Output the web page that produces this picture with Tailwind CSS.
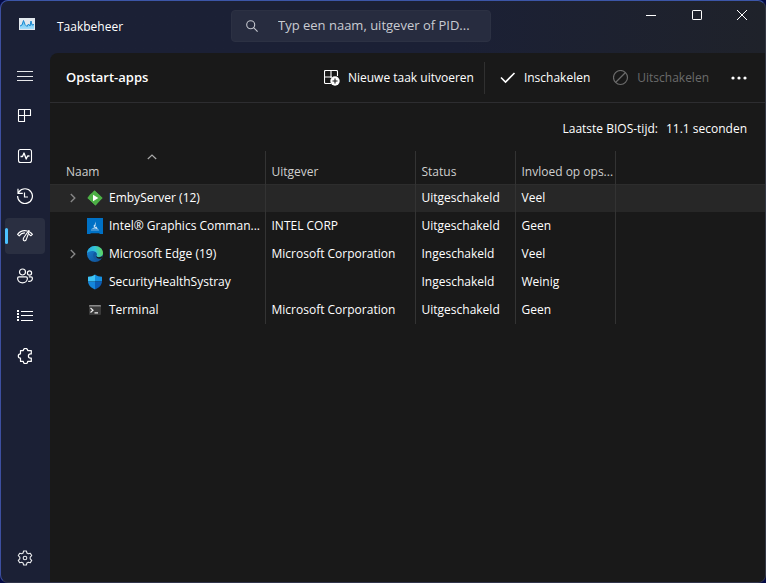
<!DOCTYPE html>
<html lang="nl">

<head>
  <meta charset="UTF-8" />
  <meta name="viewport" content="width=device-width, initial-scale=1.0" />
  <title>Taakbeheer</title>
  <script src="https://cdn.jsdelivr.net/npm/@tailwindcss/browser@4"></script>
</head>

<body class="bg-[#050b45] text-white text-xs font-['Open_Sans','Noto_Sans',sans-serif]">
  <div class="min-h-screen flex flex-col rounded-lg overflow-hidden border border-t-[#3c56a8] border-l-[#3d4fa0] border-r-[#343844] border-b-[#30344a] bg-linear-to-r from-[#1b2035] from-60% to-[#1f222a]">
    <!-- Title bar -->
    <header class="h-[52px] flex items-start">
      <div class="w-[230px] h-[52px] shrink-0 flex items-center pl-[18px] gap-[22px]">
        <svg class="w-4 h-4 -mt-1" viewBox="0 0 16 16">
          <defs>
            <linearGradient id="area" x1="0" y1="0" x2="0" y2="1">
              <stop offset="0" stop-color="#4fc0f0" />
              <stop offset="1" stop-color="#a5dcfa" />
            </linearGradient>
          </defs>
          <rect x="0" y="1" width="16" height="12" fill="#e2e8ee" />
          <path d="M1 9 3 8 4.500 3.500 6 7.500 8 9.500 9.500 7 11 9 12 4 13 8 15 7.500V12H1z" fill="url(#area)" />
          <path d="M1 9 3 8 4.500 3.500 6 7.500 8 9.500 9.500 7 11 9 12 4 13 8 15 7.500" fill="none" stroke="#1987cf" />
        </svg>
        <h1>Taakbeheer</h1>
      </div>
      <label class="mt-[9px] w-[260px] h-8 flex items-center gap-5 px-[14px] rounded bg-[#272c3f] border border-[#2c3143]">
        <svg class="w-3 h-3 shrink-0" viewBox="0 0 12 12" fill="none" stroke="#c4c6cd" stroke-width="1.1">
          <circle cx="4.700" cy="4.700" r="4" />
          <path d="m7.600 7.600 4 4" />
        </svg>
        <input type="text" aria-label="Zoeken" placeholder="Typ een naam, uitgever of PID..." class="min-w-0 flex-1 text-[13px] outline-none placeholder:text-[#c9cbd2]" />
      </label>
      <div class="ml-auto flex">
        <button aria-label="Minimaliseren" class="w-[46px] h-7 grid place-items-center hover:bg-white/10">
          <svg class="w-[10px] h-[10px]" viewBox="0 0 10 10" stroke="#fff"><path d="M0 5.500h10" /></svg>
        </button>
        <button aria-label="Maximaliseren" class="w-[45px] h-7 grid place-items-center hover:bg-white/10">
          <svg class="w-[10px] h-[10px]" viewBox="0 0 10 10" fill="none" stroke="#fff"><rect x=".5" y=".5" width="9" height="9" rx=".6" /></svg>
        </button>
        <button aria-label="Sluiten" class="w-[46px] h-7 grid place-items-center hover:bg-red-600">
          <svg class="w-[10px] h-[10px]" viewBox="0 0 10 10" stroke="#fff"><path d="m0 0 10 10M10 0 0 10" /></svg>
        </button>
      </div>
    </header>

    <div class="flex-1 flex">
      <!-- Navigation -->
      <nav class="w-[49px] shrink-0 flex flex-col gap-1 px-1 pt-[5px] pb-[6px]">
        <button aria-label="Menu" class="h-9 w-10 grid place-items-center rounded">
          <svg class="w-4 h-4" viewBox="0 0 16 16" stroke="#e6e7ea"><path d="M0 3.500h16M0 8.500h16M0 12.500h16" /></svg>
        </button>
        <a href="#processen" aria-label="Processen" class="h-9 w-10 grid place-items-center rounded">
          <svg class="w-4 h-4" viewBox="0 0 16 16" fill="none" stroke="#fff" stroke-width="1.1">
            <path d="M2 1.500H13Q13.500 1.500 13.500 2V7.500H1.500V2Q1.500 1.500 2 1.500zM1.500 7.500V13Q1.500 13.500 2 13.500H7.500V1.500" />
          </svg>
        </a>
        <a href="#prestaties" aria-label="Prestaties" class="h-9 w-10 grid place-items-center rounded">
          <svg class="w-4 h-4" viewBox="0 0 16 16" fill="none" stroke="#fff" stroke-width="1.1" stroke-linejoin="round">
            <rect x="1.500" y="1.500" width="13" height="13" rx="2" />
            <path d="M3.500 8.500H5.500L7 5 9.200 11 10.600 8H12.500" stroke-width="1.300" />
          </svg>
        </a>
        <a href="#geschiedenis" aria-label="App-geschiedenis" class="h-9 w-10 grid place-items-center rounded">
          <svg class="w-4 h-4" viewBox="0 0 16 16" fill="none" stroke="#fff" stroke-width="1.2">
            <path d="M.6 8A7.400 7.400 0 1 0 2 3.800L1 5.300M1 .8V5.400H5.800M7.500 4.500V9H11" />
          </svg>
        </a>
        <a href="#opstart-apps" aria-label="Opstart-apps" aria-current="page" class="h-9 w-10 flex items-center rounded bg-[#2a2f41]">
          <span class="w-[3px] h-4 rounded-full bg-[#4cc2ff]"></span>
          <svg class="w-4 h-4 ml-[9px]" viewBox="0 0 16 16" fill="none" stroke="#fff" stroke-width="1.1" stroke-linejoin="round" stroke-linecap="round">
            <path d="M.6 6.400C2.200 4 4.800 2.600 7.800 2.600 8.700 2.600 9.500 2.700 10.300 3M.6 6.400 2.200 7.800C3.400 6.200 5.200 5 7.500 4.900M13 4.300C14 4.900 14.800 5.600 15.400 6.400L13.800 7.800 12.200 6.300" />
            <path d="M11.600 2.800 6.700 9.800C5.800 11.400 6.300 12.600 7.400 12.800 8.600 13 9.300 12 9.500 10.900L12.300 3.200Q12.100 2.400 11.600 2.800z" />
          </svg>
        </a>
        <a href="#gebruikers" aria-label="Gebruikers" class="h-9 w-10 grid place-items-center rounded">
          <svg class="w-4 h-4" viewBox="0 0 16 16" fill="none" stroke="#fff" stroke-width="1.200">
            <circle cx="5.500" cy="4" r="3" />
            <circle cx="12.500" cy="5" r="2.100" />
            <path d="M2 8.900H9Q10.400 8.900 10.400 10.300C10.400 13.200 8.200 14.800 5.500 14.800S.6 13.200.6 10.300Q.6 8.900 2 8.900zM11.800 8.900H14Q15.400 8.900 15.400 10.300C15.400 12.600 13.900 13.700 11.200 13.400" />
          </svg>
        </a>
        <a href="#details" aria-label="Details" class="h-9 w-10 grid place-items-center rounded">
          <svg class="w-4 h-4" viewBox="0 0 16 16" fill="none" stroke="#fff">
            <path d="M4 3.500H16M4 7.500H16M4 12.500H16" />
            <path d="M1 2v12" stroke-width="2" stroke-dasharray="2 1" />
          </svg>
        </a>
        <a href="#services" aria-label="Services" class="h-9 w-10 grid place-items-center rounded">
          <svg class="w-4 h-4" viewBox="0 0 16 16" fill="none" stroke="#fff" stroke-width="1.200" stroke-linejoin="round">
            <path d="M3.500 2.600H6.300A2.200 2.200 0 0 1 10.700 2.600H14.300V5.900H13.500A2.100 2.100 0 0 0 13.500 10.100H14.300V13.400H10.700A2.200 2.200 0 0 1 6.300 13.400H3.500V10.200A2.200 2.200 0 0 1 3.500 5.800z" />
          </svg>
        </a>
        <a href="#instellingen" aria-label="Instellingen" class="mt-auto h-9 w-10 grid place-items-center rounded">
          <svg class="w-4 h-4" viewBox="0 0 16 16" fill="none" stroke="#e8e9ec" stroke-linejoin="round" stroke-width="1.100">
            <path d="M6.600 1H9.400L9.900 3 11.300 3.800 13.300 3.200 14.700 5.600 13.200 7.100V8.900L14.700 10.400 13.300 12.800 11.300 12.200 9.900 13 9.400 15H6.600L6.100 13 4.700 12.200 2.700 12.800 1.300 10.400 2.800 8.900V7.100L1.300 5.600 2.700 3.200 4.700 3.800 6.100 3z" />
            <circle cx="8" cy="8" r="1.800" />
          </svg>
        </a>
      </nav>

      <main class="flex-1 min-w-0 bg-[#191919] rounded-tl-lg">
        <!-- Toolbar -->
        <div class="h-[50px] flex items-center pl-4 pr-2 border-b border-[#2d2d30]">
          <h2 class="text-[13px] font-semibold">Opstart-apps</h2>
          <button class="ml-auto h-8 flex items-center gap-2 pr-[10px]">
            <svg class="w-4 h-4" viewBox="0 0 16 16" fill="none" stroke="#fff" stroke-width="1.100">
              <path d="M7 13.500H1.500Q.5 13.500.5 12.500V1.500Q.5.500 1.500.5H12.500Q13.500.5 13.500 1.500V6M.5 7H8M7 .5V8" />
              <circle cx="11" cy="11" r="4.700" fill="#fff" stroke="none" />
              <path d="M11 8.500v5M8.500 11h5" stroke="#191919" />
            </svg>
            Nieuwe taak uitvoeren
          </button>
          <span class="w-px h-8 bg-[#303030]"></span>
          <button class="h-8 flex items-center gap-2 px-[15px]">
            <svg class="w-4 h-4" viewBox="0 0 16 16" fill="none" stroke="#fff" stroke-width="1.600"><path d="m1 7.500 4.500 4.500L14.500 3" /></svg>
            Inschakelen
          </button>
          <button disabled class="h-8 flex items-center gap-2 pl-2 pr-3 text-[#6b6b6b]">
            <svg class="w-4 h-4" viewBox="0 0 16 16" fill="none" stroke="#6b6b6b" stroke-width="1.200"><circle cx="7.500" cy="7.500" r="7" /><path d="M2.500 12.500 12.500 2.500" /></svg>
            Uitschakelen
          </button>
          <button aria-label="Meer opties" class="w-9 h-8 grid place-items-center">
            <svg class="w-4 h-4" viewBox="0 0 16 16" fill="#fff"><circle cx="2" cy="8" r="1.600" /><circle cx="8" cy="8" r="1.600" /><circle cx="14" cy="8" r="1.600" /></svg>
          </button>
        </div>

        <div class="h-12 flex items-center justify-end gap-2 pr-[18px] pt-1">
          <span>Laatste BIOS-tijd:</span>
          <span>11.1 seconden</span>
        </div>

        <!-- Startup apps -->
        <table class="w-full table-fixed text-left">
          <colgroup>
            <col class="w-[215px]" />
            <col class="w-[150px]" />
            <col class="w-[100px]" />
            <col class="w-[100px]" />
            <col />
          </colgroup>
          <thead class="text-[#cfcfcf]">
            <tr class="h-[33px] border-b border-[#2d2d2d]">
              <th class="p-0 pl-4 border-r border-[#333] font-normal align-bottom">
                <div class="flex flex-col">
                  <svg class="w-[10px] h-[6px] ml-[81px]" viewBox="0 0 10 6" fill="none" stroke="#a8a8a8" stroke-width="1.200"><path d="m.8 5 4.200-4 4.200 4" /></svg>
                  <span class="leading-6">Naam</span>
                </div>
              </th>
              <th class="p-0 pl-[6px] border-r border-[#333] font-normal align-bottom leading-6">Uitgever</th>
              <th class="p-0 pl-[6px] border-r border-[#333] font-normal align-bottom leading-6">Status</th>
              <th class="p-0 pl-[6px] border-r border-[#333] font-normal align-bottom leading-6 whitespace-nowrap">Invloed op ops...</th>
              <td></td>
            </tr>
          </thead>
          <tbody id="apps"></tbody>
        </table>
      </main>
    </div>
  </div>

  <script>
    const icons = {
      emby: `<path d="M7.500.5 15.500 8 8.500 15.500.5 8z" fill="#52b54b"/><path d="M3 4.500 5 3 7.500.5 13 5.500 15.500 8 11.500 11.500 8.500 15.500 5 12 .5 8z" fill="#4caf45"/><path d="M6 4.800 11.300 8 6 11.200z" fill="#fff"/>`,
      intel: `<path d="M0 0H16V16H13L12 15.300H4L3 16H0z" fill="#0071c5"/><path d="M8.700 3.500 8.500 8 7 9.500 6.600 7.500 7.500 7z" fill="#d6eaf8"/><path d="M4.500 11 7 9.500 9.500 8.500 11 11.500 8 10.500z" fill="#c2def3"/><path d="M4 12h8" stroke="#8fc3ea" stroke-width=".8"/>`,
      edge: `<defs><linearGradient id="e1" x1="0" y1=".3" x2="1" y2=".2"><stop offset="0" stop-color="#25a9e0"/><stop offset=".5" stop-color="#34c5d8"/><stop offset="1" stop-color="#64d84d"/></linearGradient><linearGradient id="e2" x1="0" y1="0" x2="1" y2="1"><stop offset="0" stop-color="#1684d8"/><stop offset="1" stop-color="#114a8b"/></linearGradient></defs>
        <circle cx="8" cy="8" r="8" fill="url(#e2)"/><path d="M0 7.500C.3 3.200 3.700 0 8 0c4.500 0 8 3.200 8 7 0 2.300-1.600 4-4 4-1.700 0-2.900-.5-2.700-1.200.8-1 .7-3.900-2.300-4.600C4.200 4.600 1 5.500 0 7.500z" fill="url(#e1)"/><path d="M9.300 9.800c0 1.300 2 2.200 4 1.600 1-.2 1.600-.7 2-.6-.2 1-1.600 2.600-2.500 3.200C8.500 15 6 12 6.200 9.200 6.300 7.500 7 6.700 8 6c1.800.8 2.200 2.500 1.300 3.800z" fill="#12599f"/><path d="M9.300 9.700c0 1 2 1.900 4.200 1.400.8-.2 1.400-.5 2-1L14.800 12.300c-3 1.200-6-.2-5.500-2.600z" fill="#191919"/>`,
      shield: `<path d="M8 .5C10 2 12.500 2.700 15 2.800V7.500H8z" fill="#1690e0"/><path d="M8 .5C6 2 3.500 2.700 1 2.800V7.500H8z" fill="#3ec3f4"/><path d="M1 7.500H8V15.500C4 13.700 1.200 11.300 1 7.500z" fill="#1486dc"/><path d="M15 7.500H8V15.500C12 13.700 14.800 11.300 15 7.500z" fill="#0b5cb5"/>`,
      terminal: `<rect x="2" y="3" width="12" height="10" rx="1" fill="#3a3a3a"/><path d="M2 4.500V4Q2 3 3 3H13Q14 3 14 4V4.500z" fill="#8a8a8a"/><path d="M3.500 6 6 8.200 3.500 10.500M7.500 10.900H11" fill="none" stroke="#eee" stroke-width="1.200"/>`
    };

    const apps = [
      { name: "EmbyServer (12)", icon: "emby", group: true, publisher: "", status: "Uitgeschakeld", impact: "Veel", selected: true },
      { name: "Intel® Graphics Comman...", icon: "intel", publisher: "INTEL CORP", status: "Uitgeschakeld", impact: "Geen" },
      { name: "Microsoft Edge (19)", icon: "edge", group: true, publisher: "Microsoft Corporation", status: "Ingeschakeld", impact: "Veel" },
      { name: "SecurityHealthSystray", icon: "shield", publisher: "", status: "Ingeschakeld", impact: "Weinig" },
      { name: "Terminal", icon: "terminal", publisher: "Microsoft Corporation", status: "Uitgeschakeld", impact: "Geen" }
    ];

    const chevron = `<button aria-label="Uitvouwen" class="w-4 h-4 grid place-items-center"><svg class="w-[6px] h-[10px]" viewBox="0 0 6 10" fill="none" stroke="#858585" stroke-width="1.400"><path d="m.8 1 4 4-4 4" /></svg></button>`;

    document.getElementById('apps').innerHTML = apps.map(app => `
      <tr class="h-7 ${app.selected ? 'bg-[#272727]' : ''}">
        <td class="p-0 pl-[15px] border-r border-[#333]">
          <div class="flex items-center whitespace-nowrap">
            ${app.group ? chevron : '<span class="w-4"></span>'}
            <svg class="w-4 h-4 shrink-0 ml-[6px] mr-[6px]" viewBox="0 0 16 16">${icons[app.icon]}</svg>
            ${app.name}
          </div>
        </td>
        <td class="p-0 pl-[6px] border-r border-[#333] whitespace-nowrap">${app.publisher}</td>
        <td class="p-0 pl-[6px] border-r border-[#333]">${app.status}</td>
        <td class="p-0 pl-[6px] border-r border-[#333]">${app.impact}</td>
        <td></td>
      </tr>
    `).join('');
  </script>
</body>

</html>
